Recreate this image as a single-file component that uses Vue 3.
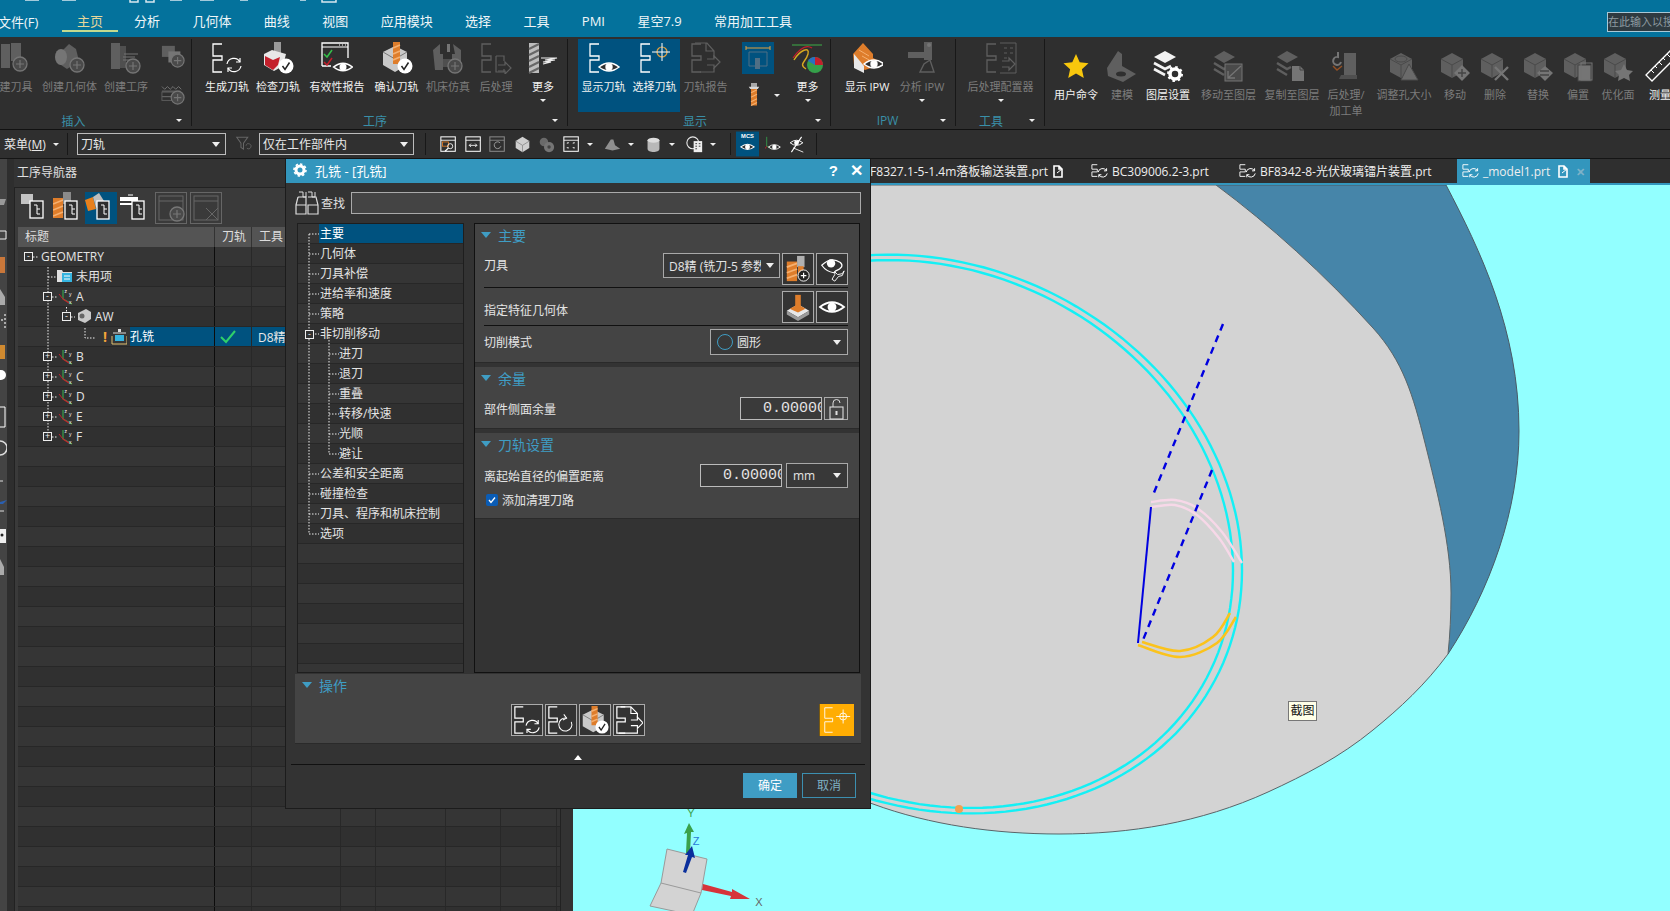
<script setup>
// tiny svg pieces shared between icons
const D = '#5f5f5f'
const D2 = '#757575'
const S5 = (c = '#fff', w = 1.3) => `<path d="M11 2H2V14H11V18H2V30H11" fill="none" stroke="${c}" stroke-width="${w}"/>`
const eye = (x, y, s = 1) => `<g transform="translate(${x} ${y}) scale(${s})"><path d="M-10 0Q0-8 10 0Q0 8-10 0Z" fill="#2f2f2f" stroke="#fff" stroke-width="1.5"/><circle r="3.7" fill="#fff"/></g>`
const badge = (x, y) => `<circle cx="${x}" cy="${y}" r="7.5" fill="#fff"/><path d="M${x - 3.5} ${y}l2.5 3.5 4.5-7" fill="none" stroke="#222" stroke-width="1.5"/>`
const plus = (x, y, c = D2) => `<circle cx="${x}" cy="${y}" r="7" fill="#4a4a4a" stroke="${c}" stroke-width="1.3"/><path d="M${x - 4} ${y}h8M${x} ${y - 4}v8" stroke="${c}" stroke-width="1.2"/>`
const refresh = (x, y, c = '#fff') => `<g transform="translate(${x} ${y})" fill="none" stroke="${c}" stroke-width="1.2"><path d="M-7 -1A7 7 0 0 1 6 -3"/><path d="M7 1A7 7 0 0 1 -6 3"/><path d="M6-7v4h-4M-6 7v-4h4"/></g>`
const drillBody = `<g><rect x="12" y="0" width="8" height="6" fill="#a8a8a8"/><path d="M9 5h14l-2 3H11z" fill="#d8d8d8"/><rect x="12" y="8" width="8" height="22" fill="#de7d2b"/><path d="M12 13l8-4M12 19l8-4M12 25l8-4M12 30l8-4" stroke="#f5b070" stroke-width="1.6"/></g>`
const cubeDim = `<path d="M2 9L13 3l11 6v13l-11 6-11-6z" fill="${D}"/><path d="M2 9l11 6 11-6M13 15v13" fill="none" stroke="#4a4a4a"/>`
const arrowOut = (x, y, c) => `<path d="M${x} ${y}h7v-3l6 6-6 6v-3h-7" fill="none" stroke="${c}" stroke-width="1.2"/>`

const icons = {
  toolAdd: `<rect x="1" y="2" width="9" height="24" fill="${D}"/><rect x="11" y="1" width="10" height="18" fill="${D}"/>${plus(20, 22)}`,
  geomAdd: `<path d="M4 13L15 2l7 5 3 12-12 8-9-6z" fill="${D}"/><ellipse cx="7" cy="15" rx="6" ry="8" fill="${D2}"/>${plus(23, 23)}`,
  opAdd: `<rect x="1" y="1" width="9" height="26" fill="${D}"/><rect x="10" y="4" width="6" height="22" fill="#4f4f4f"/><path d="M14 12h14M13 15h12M13 18h10" stroke="${D2}"/>${plus(23, 24)}`,
  small1: `<rect x="1" y="1" width="14" height="12" fill="${D}"/><rect x="8" y="7" width="13" height="12" fill="${D2}"/>${plus(18, 17)}`,
  small2: `<path d="M1 5l3 3 3-3 3 3 3-3 3 3 3-3 3 3" fill="none" stroke="${D2}"/><path d="M1 10h20M1 16h12" stroke="${D2}"/><rect x="1" y="11" width="16" height="9" fill="none" stroke="${D}"/>${plus(18, 17)}`,
  gen: `${S5()}${refresh(23, 23)}`,
  verify: `<rect x="12" y="0" width="7" height="16" fill="#9a9a9a"/><path d="M2 12l8-4 14 4-3 12-9 5-10-6z" fill="#e8e8e8"/><path d="M3 14l8 4 7-3-2 8-5 5-8-5z" fill="#c4202c"/>${badge(24, 24)}`,
  report: `<path d="M1 24V1h26v15M1 24h9" fill="none" stroke="#fff" stroke-width="1.3"/><path d="M1 5h26M18 3h1M21 3h1M24 3h1" stroke="#fff"/><path d="M3 12l3 3 5-7" fill="none" stroke="#35c04a" stroke-width="1.5"/><path d="M3 20l3 3 5-7" fill="none" stroke="#c4202c" stroke-width="1.5"/>${eye(22, 25, .95)}`,
  confirm: `<path d="M2 10l12-6 12 6v13l-12 7-12-7z" fill="#c9c9c9"/><path d="M2 10l12 7 12-7" fill="none" stroke="#777"/><rect x="12" y="0" width="7" height="22" fill="#de7d2b"/><path d="M12 6l7-3M12 12l7-3M12 18l7-3" stroke="#f5b070" stroke-width="1.6"/>${badge(24, 24)}`,
  sim: `<path d="M1 8l7-6v10h3V28H3z" fill="${D}"/><path d="M21 2l8 6v20h-9V12h3z" fill="${D}"/><rect x="11" y="17" width="11" height="8" fill="#4f4f4f"/><rect x="15" y="2" width="3" height="8" fill="${D2}"/>${plus(23, 24)}`,
  post: `${S5(D)}<path d="M16 14h8v5M24 27v3h-8V14" fill="none" stroke="${D}" stroke-width="1.2"/>${arrowOut(18, 23, D)}`,
  more: `<rect x="2" y="1" width="10" height="30" fill="#bcbcbc"/><path d="M2 7l10-5M2 13l10-5M2 19l10-5M2 25l10-5M2 31l10-5" stroke="#666" stroke-width="2"/><path d="M14 16h16l-12 2h10l-12 2h8l-8 2" fill="none" stroke="#eee" stroke-width="1.2"/>`,
  show: `${S5()}${eye(21, 25)}`,
  select: `${S5()}<circle cx="23" cy="10" r="5" fill="none" stroke="#e0a040" stroke-width="1.2"/><path d="M13 10h18M23 1v18" stroke="#fff"/>`,
  pathReport: `${S5(D)}<path d="M5 1h12l7 8v7M16 1v8h8M10 30h14v-4" fill="none" stroke="${D}" stroke-width="1.2"/>${arrowOut(17, 17, D)}`,
  cross: `<rect width="32" height="32" fill="#00527f"/><path d="M4 6h24M4 4v4M28 4v4" stroke="#e0a040"/><path d="M7 10h18v14H7z" fill="none" stroke="#4f6f85"/><rect x="13" y="16" width="5" height="11" fill="#4f6f85"/>`,
  drill: drillBody,
  colors: `<path d="M0 3h30" stroke="#3fae49"/><path d="M2 18C8 8 18 4 16 12S6 22 14 27" fill="none" stroke="#d8a820" stroke-width="1.4"/><path d="M1 16C8 6 14 2 20 6" fill="none" stroke="#c4202c" stroke-width="1.3"/><circle cx="23" cy="23" r="8" fill="#35a04a"/><path d="M23 23V15A8 8 0 0 1 31 23z" fill="#c4202c"/><path d="M23 23L16 19A8 8 0 0 1 23 15z" fill="#2a6fc0"/>`,
  ipw: `<path d="M2 12L12 1l10 11v4l4 2v6L14 28 3 23z" fill="#de7d2b"/><path d="M3 12v14l10 5V24z" fill="#e8e8e8"/><path d="M8 8l10 6M11 14l9 5" stroke="#f5b070"/>${eye(23, 22, 1)}`,
  analyze: `<path d="M2 10h22v6H2z" fill="${D}"/><rect x="18" y="0" width="8" height="18" fill="${D}"/><path d="M14 30l4-8 6-4 4 12z" fill="none" stroke="${D}" stroke-width="1.4"/><circle cx="23" cy="3" r="2" fill="${D2}"/>`,
  postCfg: `${S5(D)}<path d="M15 1h16v30H15M19 6h3M25 6h3M19 11h3M25 11h3M19 16h3" fill="none" stroke="${D}"/>${arrowOut(17, 19, D)}`,
  star: `<path d="M16 4l3.7 8.2 8.8 1-6.6 6 1.9 8.8L16 23.4 8.2 28l1.9-8.8-6.6-6 8.8-1z" fill="#f8c70d"/>`,
  model: `<path d="M1 18L12 1l4 3v12l14 8-13 8L2 26z" fill="${D}"/><ellipse cx="15" cy="24" rx="5" ry="2.5" fill="#2f2f2f"/>`,
  layer: `<path d="M2 7l11-6 11 6-11 6z" fill="#f2f2f2"/><path d="M2 13l11 6 6-3M2 19l11 6" fill="none" stroke="#f2f2f2" stroke-width="2.6"/><circle cx="23" cy="24" r="5" fill="none" stroke="#fff" stroke-width="3.5"/><circle cx="23" cy="24" r="7" fill="none" stroke="#fff" stroke-width="2" stroke-dasharray="2.5 3"/>`,
  moveLayer: `<path d="M1 7l10-6 11 6-11 6z" fill="${D}"/><path d="M1 13l10 6 4-2M1 19l10 6" fill="none" stroke="${D}" stroke-width="2.5"/><rect x="12" y="14" width="17" height="17" fill="#4a4a4a" stroke="${D2}"/><path d="M15 28L28 16M15 21v7h7" fill="none" stroke="${D2}" stroke-width="1.3"/>`,
  copyLayer: `<path d="M1 7l10-6 11 6-11 6z" fill="${D}"/><path d="M1 13l10 6 4-2M1 19l10 6" fill="none" stroke="${D}" stroke-width="2.5"/><path d="M16 16h8l4 4v11H16z" fill="${D2}"/><path d="M24 16v4h4" fill="none" stroke="#444"/>`,
  postShop: `<path d="M14 3h12v22H14z" fill="${D}"/><path d="M11 25h16v4H9z" fill="#4f4f4f"/><path d="M8 2v5a4 4 0 1 0 3 5" fill="none" stroke="${D2}" stroke-width="2"/><path d="M3 16l4 4 5-4" fill="none" stroke="#c06020" stroke-width="1.4" opacity=".7"/>`,
  holeSize: `${cubeDim}<ellipse cx="13" cy="9" rx="6" ry="3" fill="none" stroke="#4a4a4a"/><path d="M21 14l9 16H13z" fill="#6a6a6a" stroke="#4a4a4a"/>`,
  move: `${cubeDim}<path d="M23 15l8 8-8 8-8-8z" fill="${D2}"/><path d="M19 23h8M23 19v8" stroke="#444" stroke-width="1.4"/>`,
  del: `${cubeDim}<path d="M16 17l13 13M29 17L16 30" stroke="${D2}" stroke-width="2.4"/>`,
  replace: `${cubeDim}<path d="M15 23l8-7 8 7-8 8z" fill="${D2}"/><path d="M18 21h9M27 25h-9" stroke="#444" stroke-width="1.4"/>`,
  offset: `${cubeDim}<rect x="16" y="15" width="13" height="16" fill="${D2}" stroke="#444"/><rect x="19" y="13" width="11" height="17" fill="none" stroke="${D2}"/>`,
  optimize: `${cubeDim}<path d="M22 14l3 6 6 1-4 4 1 6-6-3-6 3 1-6-4-4 6-1z" fill="${D2}"/>`,
  ruler: `<path d="M2 25L26 1l6 6L8 31z" fill="#2f2f2f" stroke="#fff" stroke-width="1.3"/><path d="M7 20l3 3M11 16l2 2M15 12l3 3M19 8l2 2M23 4l3 3" stroke="#fff"/>`,
  // small ones, 20 box
  tbMag: `<rect x="1" y="1" width="17" height="17" fill="#2f2f2f" stroke="#fff" stroke-width="1.2"/><path d="M1 5h17" stroke="#fff"/><rect x="3" y="7" width="7" height="5" fill="none" stroke="#e07b25"/><circle cx="12" cy="12" r="3" fill="none" stroke="#fff"/><path d="M10 14l-4 4" stroke="#fff" stroke-width="1.5"/>`,
  tbFit: `<rect x="1" y="1" width="17" height="17" fill="none" stroke="#fff" stroke-width="1.2"/><path d="M1 5h17M5 11h9M5 11l2-2M5 11l2 2M14 11l-2-2M14 11l-2 2" stroke="#fff"/>`,
  tbRot: `<rect x="1" y="1" width="17" height="17" fill="none" stroke="#8a8a8a" stroke-width="1.2"/><path d="M1 5h17" stroke="#8a8a8a"/><path d="M13 8a4 4 0 1 0 1 4" fill="none" stroke="#aaa"/>`,
  tbCube: `<path d="M2 6l8-5 8 5v8l-8 5-8-5z" fill="#cfcfcf"/><path d="M2 6l8 5 8-5M10 11v8" fill="none" stroke="#8a8a8a"/>`,
  tbGear: `<circle cx="7" cy="7" r="5" fill="#6a6a6a"/><circle cx="13" cy="13" r="6" fill="#757575"/><circle cx="13" cy="13" r="2" fill="#444"/>`,
  tbFrame: `<rect x="1" y="1" width="17" height="17" fill="none" stroke="#fff" stroke-width="1.2"/><path d="M1 5h17M5 9v-1h2M14 8h-2v1M5 13v1h2M14 14h-2v-1" stroke="#fff" fill="none"/>`,
  tbCone: `<path d="M1 15l7-11h3l2 7 6 4-9 2z" fill="#8f8f8f"/>`,
  tbCyl: `<path d="M3 5v10c0 5 14 5 14 0V5z" fill="#b8b8b8"/><ellipse cx="10" cy="5" rx="7" ry="3" fill="#dcdcdc"/>`,
  tbPage: `<circle cx="8" cy="8" r="7" fill="#2f2f2f" stroke="#e8e8e8" stroke-width="1.3"/><rect x="9" y="6" width="10" height="13" fill="#eee"/><path d="M11 9h2M15 9h2M11 12h2M15 12h2M11 15h2" stroke="#222"/>`,
  tbMcs: `<rect x="-2" y="-3" width="24" height="26" fill="#00527f"/><text x="10" y="4" font-size="6" font-weight="700" fill="#fff" text-anchor="middle" font-family="Liberation Sans">MCS</text>${eye(10, 13, .7)}`,
  tbEye: `<path d="M2 1v11l6 3" fill="none" stroke="#35a04a"/><path d="M2 12l-2 3" stroke="#c4202c"/>${eye(11, 13, .7)}`,
  tbSlash: `${eye(10, 8, .75)}<path d="M16 1L4 19" stroke="#fff" stroke-width="1.3"/><path d="M6 14l12 5" stroke="#fff"/>`,
  filter: `<path d="M2 2h13l-5 7v7l-3-2V9z" fill="none" stroke="#666" stroke-width="1.2"/><path d="M13 12a3 3 0 1 1 1 3" fill="none" stroke="#666"/>`,
  // navigator
  navA: `<rect x="0" y="2" width="12" height="10" fill="#c4c4c4"/><rect x="9" y="9" width="13" height="17" fill="#2f2f2f" stroke="#fff" stroke-width="1.3"/><path d="M13 13h3v9h3M16 17h3" fill="none" stroke="#fff"/>`,
  navB: `<rect x="0" y="6" width="10" height="20" fill="#de7d2b"/><path d="M0 12l10-4M0 18l10-4M0 24l10-4" stroke="#f5b070" stroke-width="1.6"/><rect x="10" y="0" width="8" height="12" fill="#8a8a8a"/><rect x="12" y="9" width="12" height="18" fill="#2f2f2f" stroke="#fff" stroke-width="1.3"/><path d="M16 13h3v9h3M19 17h3" fill="none" stroke="#fff"/>`,
  navC: `<path d="M0 8l8-3 3 12-8 2z" fill="#e8801c"/><path d="M8 5l6-4 5 8-8 7z" fill="#bdbdbd"/><rect x="12" y="9" width="12" height="18" fill="#2f2f2f" stroke="#fff" stroke-width="1.3"/><path d="M16 13h3v9h3M19 17h3" fill="none" stroke="#fff"/>`,
  navD: `<path d="M0 6h18M0 12h14M0 8h18" stroke="#fff" stroke-width="2" fill="none"/><path d="M8 3h5" stroke="#fff"/><rect x="12" y="9" width="12" height="18" fill="#2f2f2f" stroke="#fff" stroke-width="1.3"/><path d="M16 13h3v9h3M19 17h3" fill="none" stroke="#fff"/>`,
  navE: `<rect x="4" y="4" width="24" height="24" fill="none" stroke="#666"/><path d="M4 9h24" stroke="#666"/>${plus(22, 22, '#777')}`,
  navF: `<rect x="4" y="4" width="24" height="24" fill="none" stroke="#666"/><path d="M4 9h24M16 16l12 12M28 16L16 28" stroke="#666"/>`,
  folder: `<path d="M0 2h5l1 2h9v10H0z" fill="#e0e0e0"/><rect x="5" y="5" width="10" height="9" fill="#35b4e0"/><path d="M7 8h6M7 11h6" stroke="#fff"/>`,
  mcs: `<path d="M5 2v9l9 5" fill="none" stroke="#35a04a" stroke-width="1.2"/><path d="M5 11L1 6" stroke="#c4202c"/><path d="M5 11l6 4" stroke="#c4202c" stroke-width="1.2"/><text x="6.5" y="5" font-size="5" fill="#fff" font-family="Liberation Sans">z</text><text x="11" y="8" font-size="5" fill="#fff" font-family="Liberation Sans">y</text><text x="11" y="16" font-size="5" fill="#fff" font-family="Liberation Sans">x</text>`,
  part: `<path d="M1 5l8-4 5 3v7l-6 4-7-3z" fill="#c9c9c9"/><circle cx="5" cy="8" r="2.5" fill="#666"/>`,
  hole: `<path d="M1 8v8h15V8" fill="none" stroke="#e0c070"/><rect x="4" y="7" width="9" height="6" fill="#35b4e0"/><rect x="7" y="1" width="3" height="3" fill="#ddd"/><path d="M2 5h13" stroke="#ddd"/>`,
  // dialog
  binoc: `<path d="M4 1h4v5h3V1h0M13 1h4v5h3V1" fill="none" stroke="#ddd"/><path d="M3 6h8v8H1v9h10v-9M13 6h8l2 8v9H13v-9h10M1 14l2-8" fill="none" stroke="#ddd" stroke-width="1.2"/>`,
  toolNew: `<rect x="13" y="1" width="8" height="12" fill="#b0b0b0"/><rect x="2" y="7" width="11" height="21" fill="#de7d2b"/><path d="M2 13l11-4M2 19l11-4M2 25l11-4" stroke="#f5b070" stroke-width="1.8"/><rect x="14" y="12" width="6" height="12" fill="#de7d2b"/><circle cx="20" cy="22" r="6" fill="#222" stroke="#fff"/><path d="M17 22h6M20 19v6" stroke="#fff" stroke-width="1.3"/>`,
  toolView: `<path d="M3 11Q13 1 23 8Q28 13 18 17l-2 2Q8 18 3 11z" fill="none" stroke="#fff" stroke-width="1.3"/><circle cx="13" cy="9" r="4.5" fill="#fff"/><path d="M17 18l3 3 5-1 2-3-2 5-4 1-4 5-3-2 3-5z" fill="none" stroke="#fff"/>`,
  geomSpec: `<path d="M2 19l12-7 12 7-12 7z" fill="#e8e8e8"/><path d="M2 19v4l12 7v-4zM26 19v4l-12 7v-4z" fill="#9a9a9a"/><path d="M5 17l9-5 8 5-8 4z" fill="#de7d2b"/><rect x="11" y="2" width="6" height="14" fill="#de7d2b"/>`,
  eyeBig: eye(14, 12, 1.2),
  lock: `<rect x="3" y="9" width="13" height="12" fill="none" stroke="#ddd" stroke-width="1.1"/><path d="M6 9V5a3.5 3.5 0 0 1 7 0" fill="none" stroke="#ddd"/><rect x="8.5" y="13" width="2" height="4" fill="#ddd"/>`,
  opGen: `${S5()}${refresh(21, 23)}`,
  opReplay: `${S5()}<path d="M26 18a7 7 0 1 1-5-4" fill="none" stroke="#fff" stroke-width="1.1"/><path d="M18 10l3 4-4 2" fill="none" stroke="#fff" stroke-width="1.1"/>`,
  opPost: `<path d="M5 2h11l7 7v5M16 2v7h7M3 30h20v-4" fill="none" stroke="#fff" stroke-width="1.2" transform="translate(1 0)"/>${S5()}${arrowOut(17, 16, '#fff')}`,
  orange: `${S5('#fff', 1)}<circle cx="23" cy="12" r="4" fill="none" stroke="#fff"/><path d="M15 12h16M23 4v16" stroke="#fff"/>`,
  page: `<path d="M1 1h5l3 3v8H1zM6 1v3h3" fill="none" stroke="#fff" stroke-width="1.6"/><path d="M4 8l5-4" stroke="#fff"/>`,
  tabIco: `<path d="M7 1H1V6H7V9H1V14H7" fill="none" stroke="#fff"/><g transform="translate(13 10) scale(.72)" fill="none" stroke="#fff" stroke-width="1.5"><path d="M-7 -1A7 7 0 0 1 6 -3"/><path d="M7 1A7 7 0 0 1 -6 3"/><path d="M6-7v4h-4M-6 7v-4h4"/></g>`,
}

const menu = ['主页', '分析', '几何体', '曲线', '视图', '应用模块', '选择', '工具', 'PMI', '星空7.9', '常用加工工具']

const groups = [
  { label: '插入', w: 202, foot: 34, items: [
    { t: '建刀具', i: 'toolAdd', w: 52, dim: 1 }, { t: '创建几何体', i: 'geomAdd', w: 55, dim: 1 }, { t: '创建工序', i: 'opAdd', w: 58, dim: 1 }, { col: ['small1', 'small2'], w: 35 },
  ] },
  { label: '工序', w: 376, pad: 9, foot: 18, items: [
    { t: '生成刀轨', i: 'gen', w: 52 }, { t: '检查刀轨', i: 'verify', w: 50 }, { t: '有效性报告', i: 'report', w: 68 }, { t: '确认刀轨', i: 'confirm', w: 51 },
    { t: '机床仿真', i: 'sim', w: 52, dim: 1 }, { t: '后处理', i: 'post', w: 44, dim: 1 }, { t: '更多', i: 'more', w: 50, drop: 1 },
  ] },
  { label: '显示', w: 263, pad: 10, foot: 18, items: [
    { t: '显示刀轨', i: 'show', w: 51, on: 1 }, { t: '选择刀轨', i: 'select', w: 51, on: 1 }, { t: '刀轨报告', i: 'pathReport', w: 51, dim: 1 },
    { mix: 1, w: 53 }, { t: '更多', i: 'colors', w: 47, drop: 1 },
  ] },
  { label: 'IPW', w: 125, pad: 5, foot: 16, items: [
    { t: '显示 IPW', i: 'ipw', w: 62 }, { t: '分析 IPW', i: 'analyze', w: 48, dim: 1, drop: 1 },
  ] },
  { label: '工具', w: 89, foot: 18, items: [{ t: '后处理配置器', i: 'postCfg', w: 89, dim: 1, drop: 1 }] },
]

const tail = [
  { t: '用户命令', i: 'star', w: 58 }, { t: '建模', i: 'model', w: 34, dim: 1 }, { t: '图层设置', i: 'layer', w: 58 }, { t: '移动至图层', i: 'moveLayer', w: 63, dim: 1 },
  { t: '复制至图层', i: 'copyLayer', w: 64, dim: 1 }, { t: '后处理/', t2: '加工单', i: 'postShop', w: 44, dim: 1 }, { t: '调整孔大小', i: 'holeSize', w: 72, dim: 1 },
  { t: '移动', i: 'move', w: 30, dim: 1 }, { t: '删除', i: 'del', w: 50, dim: 1 }, { t: '替换', i: 'replace', w: 36, dim: 1 }, { t: '偏置', i: 'offset', w: 44, dim: 1 },
  { t: '优化面', i: 'optimize', w: 36, dim: 1 }, { t: '测量', i: 'ruler', w: 48 },
]

const tbIcons = [
  { i: 'tbMag' }, { i: 'tbFit' }, { i: 'tbRot' }, { i: 'tbCube' }, { i: 'tbGear' }, { i: 'tbFrame', drop: 1 }, { i: 'tbCone', drop: 1 }, { i: 'tbCyl', drop: 1 }, { i: 'tbPage', drop: 1 },
]

const navTools = ['navA', 'navB', 'navC', 'navD', 'navE', 'navF']

const navCols = [197, 37, 89, 35, 70, 55, 56]
const navRows = [
  { t: 'GEOMETRY', x: 6, exp: '-', gap: 2 },
  { t: '未用项', x: 39, icon: 'folder', iw: 15, gap: 4 },
  { t: 'A', x: 25, exp: '-', icon: 'mcs', iw: 15, gap: 3 },
  { t: 'AW', x: 44, exp: '-', icon: 'part', iw: 14, gap: 4 },
  { t: '孔铣', x: 85, warn: 1, icon: 'hole', iw: 16, gap: 3, picked: 1 },
  { t: 'B', x: 25, exp: '+', icon: 'mcs', iw: 15, gap: 3 },
  { t: 'C', x: 25, exp: '+', icon: 'mcs', iw: 15, gap: 3 },
  { t: 'D', x: 25, exp: '+', icon: 'mcs', iw: 15, gap: 3 },
  { t: 'E', x: 25, exp: '+', icon: 'mcs', iw: 15, gap: 3 },
  { t: 'F', x: 25, exp: '+', icon: 'mcs', iw: 15, gap: 3 },
  ...Array.from({ length: 24 }, () => ({})),
]

const steps = [
  { t: '主要', on: 1 }, { t: '几何体' }, { t: '刀具补偿' }, { t: '进给率和速度' }, { t: '策略' }, { t: '非切削移动', exp: 1 },
  { t: '进刀', sub: 1 }, { t: '退刀', sub: 1 }, { t: '重叠', sub: 1 }, { t: '转移/快速', sub: 1 }, { t: '光顺', sub: 1 }, { t: '避让', sub: 1 },
  { t: '公差和安全距离' }, { t: '碰撞检查' }, { t: '刀具、程序和机床控制' }, { t: '选项' },
  ...Array.from({ length: 7 }, () => ({ t: '' })),
]
const stepLines = steps.filter(s => s.t).map((s, n) => {
  const y = 10 + n * 20
  return s.sub ? `M31 ${y}H41` : `M11 ${y}H21`
}).join('') + 'M11 10V310M31 110V230'

// smooth line through picked points of the model curves
const spline = pts => {
  let d = `M${pts[0][0]} ${pts[0][1]}`
  for (let n = 0; n < pts.length - 1; n++) {
    const a = pts[Math.max(n - 1, 0)], b = pts[n], c = pts[n + 1], e = pts[Math.min(n + 2, pts.length - 1)]
    d += `C${(b[0] + (c[0] - a[0]) / 6).toFixed(1)} ${(b[1] + (c[1] - a[1]) / 6).toFixed(1)} ${(c[0] - (e[0] - b[0]) / 6).toFixed(1)} ${(c[1] - (e[1] - b[1]) / 6).toFixed(1)} ${c[0]} ${c[1]}`
  }
  return d
}
// the hole edge is a sheared ellipse seen in perspective, the left side sits behind the dialog
const ring = (a, b) => {
  const pts = []
  for (let deg = -112; deg <= 112; deg += 2) {
    const t = deg * Math.PI / 180
    pts.push(`${(930 + a * Math.cos(t)).toFixed(1)} ${(534 + 36.5 * Math.cos(t) + b * Math.sin(t)).toFixed(1)}`)
  }
  return 'M' + pts.join('L')
}
const ringOuter = ring(312, 277)
const ringInner = ring(303, 271.5)
const pinkOuter = spline([[1151, 502], [1175, 500], [1197, 508], [1222, 532], [1242, 563]])
const pinkInner = spline([[1152, 507], [1175, 505], [1197, 515], [1219, 538], [1234, 562]])
const goldOuter = spline([[1138, 645], [1180, 657], [1217, 643], [1236, 617]])
const goldInner = spline([[1142, 642], [1180, 651], [1213, 637], [1230, 613]])
</script>

<template>
  <div class="app">
    <header class="menubar">
      <svg class="quick" width="400" height="3"><path d="M25 0h14M62 0h14M130 0v2h8v-2M146 0v2h8v-2M170 0h12M200 0h14M240 0h8M300 0h6M322 0v2h14v-2" stroke="#d8e8ef" stroke-width="1.5" fill="none" /></svg>
      <span class="menu-file">文件(F)</span>
      <nav class="menu-list">
        <span v-for="(m, n) in menu" :key="m" class="menu-item" :class="{ active: n === 0 }">{{ m }}</span>
      </nav>
      <div class="search-box">在此输入以搜索</div>
    </header>

    <section class="ribbon">
      <div v-for="g in groups" :key="g.label" class="rgroup" :style="{ width: g.w + 'px', paddingLeft: (g.pad || 0) + 'px' }">
        <div class="ritems">
          <template v-for="it in g.items" :key="it.t || it.w">
            <div v-if="it.col" class="rcol" :style="{ width: it.w + 'px' }">
              <svg v-for="c in it.col" :key="c" width="24" height="24" viewBox="0 0 26 24" v-html="icons[c]"></svg>
            </div>
            <div v-else-if="it.mix" class="rmix" :style="{ width: it.w + 'px' }">
              <svg width="32" height="32" viewBox="0 0 32 32" v-html="icons.cross"></svg>
              <div class="rmix-low">
                <svg width="20" height="24" viewBox="4 0 24 32" v-html="icons.drill"></svg>
                <i class="tri small"></i>
              </div>
            </div>
            <div v-else class="ritem" :class="{ dim: it.dim, on: it.on }" :style="{ width: it.w + 'px' }">
              <svg width="32" height="32" viewBox="0 0 32 32" v-html="icons[it.i]"></svg>
              <span class="rlabel">{{ it.t }}</span>
              <i v-if="it.drop" class="tri small"></i>
            </div>
          </template>
        </div>
        <div class="rfoot" :style="{ paddingRight: g.foot + 'px' }">
          <span>{{ g.label }}</span>
          <i class="tri small"></i>
        </div>
      </div>
      <div class="rtail">
        <div v-for="it in tail" :key="it.t" class="ritem" :class="{ dim: it.dim }" :style="{ width: it.w + 'px' }">
          <svg width="32" height="32" viewBox="0 0 32 32" v-html="icons[it.i]"></svg>
          <span class="rlabel">{{ it.t }}</span>
          <span v-if="it.t2" class="rlabel second">{{ it.t2 }}</span>
        </div>
      </div>
    </section>

    <section class="toolbar">
      <span class="tb-menu">菜单(<u>M</u>)</span>
      <i class="tri small"></i>
      <b class="tb-sep first"></b>
      <div class="tb-select wide">刀轨<i class="tri"></i></div>
      <svg class="tb-filter" width="17" height="18" viewBox="0 0 20 20" v-html="icons.filter"></svg>
      <div class="tb-select">仅在工作部件内<i class="tri"></i></div>
      <b class="tb-sep before-icons"></b>
      <div class="tb-icons">
        <template v-for="t in tbIcons" :key="t.i">
          <svg width="17" height="17" viewBox="0 0 20 20" v-html="icons[t.i]"></svg>
          <i v-if="t.drop" class="tri small"></i>
        </template>
      </div>
      <b class="tb-sep"></b>
      <div class="tb-views">
        <svg class="mcs-ico" width="23" height="26" viewBox="-2 -3 24 26" v-html="icons.tbMcs"></svg>
        <svg width="17" height="17" viewBox="0 0 20 20" v-html="icons.tbEye"></svg>
        <svg width="17" height="17" viewBox="0 0 20 20" v-html="icons.tbSlash"></svg>
      </div>
      <b class="tb-sep"></b>
    </section>

    <main class="work">
      <aside class="strip">
        <svg width="7" height="752" viewBox="0 0 7 752">
          <path d="M0 40h6l-2 6H0z" fill="#999" />
          <path d="M0 72h6v8H0" fill="none" stroke="#eee" />
          <rect y="98" width="5" height="16" fill="#c9773a" />
          <path d="M0 130l5 8v8H0z" fill="#aaa" />
          <path d="M5 155v14M2 160v3" stroke="#ccc" stroke-dasharray="2 2" stroke-width="1.5" />
          <path d="M0 186h5v14H0z" fill="#d08a30" />
          <circle cx="1" cy="216" r="5" fill="#fff" />
          <path d="M0 248h5v20H0" fill="none" stroke="#fff" />
          <path d="M0 282a6 6 0 0 1 0 14" fill="none" stroke="#ddd" stroke-width="1.5" />
          <path d="M0 322h3" stroke="#ddd" /><path d="M0 343l7-2-4 4H0z" fill="#2a5fb0" />
          <path d="M0 352h4" stroke="#ddd" />
          <rect y="370" width="6" height="14" fill="#eee" /><circle cx="2" cy="376" r="1.5" fill="#222" />
          <path d="M0 400l4 8v8H0z" fill="#aaa" />
        </svg>
      </aside>

      <div class="nav">
        <div class="nav-title">工序导航器</div>
        <div class="nav-frame">
          <div class="nav-tools">
            <span v-for="(t, n) in navTools" :key="t" class="nav-tool" :class="{ on: n === 2, off: n > 3 }">
              <svg width="32" height="32" viewBox="0 0 32 32" v-html="icons[t]"></svg>
            </span>
          </div>
          <div class="nav-head">
            <span v-for="(c, n) in navCols" :key="n" :style="{ width: c + 'px' }">{{ ['标题', '刀轨', '工具'][n] }}</span>
          </div>
          <div class="nav-body">
            <svg class="tree-lines" width="120" height="210"><path d="M30 20V190M30 30H39M15 10H21M34 50H39M34 110H39M34 130H39M34 150H39M34 170H39M34 190H39M53 70H57M48.5 60V66M67 81V91H77" stroke="#eee" stroke-dasharray="1.5 1.5" fill="none" /></svg>
            <div v-for="(r, n) in navRows" :key="n" class="nav-row" :class="{ picked: r.picked }">
              <span class="nav-cell first" :style="{ paddingLeft: (r.x || 0) + 'px' }">
                <i v-if="r.exp" class="exp">{{ r.exp }}</i>
                <i v-if="r.warn" class="warn">!</i>
                <svg v-if="r.icon" class="row-ico" :width="r.iw" height="17" :viewBox="`0 0 ${r.iw} 17`" v-html="icons[r.icon]"></svg>
                <span v-if="r.t" class="nav-text" :style="{ marginLeft: r.gap + 'px' }">{{ r.t }}</span>
              </span>
              <span class="nav-cell second">
                <svg v-if="r.picked" width="16" height="14" viewBox="0 0 16 14"><path d="M1 7l5 5L15 1" fill="none" stroke="#2fd06a" stroke-width="2" /></svg>
              </span>
              <span class="nav-cell third">{{ r.picked ? 'D8精' : '' }}</span>
              <span class="nav-cell"></span><span class="nav-cell"></span><span class="nav-cell"></span><span class="nav-cell"></span>
            </div>
          </div>
        </div>
      </div>

      <div class="view">
        <div class="tabs">
          <div class="tab one">BF8327.1-5-1.4m落板输送装置.prt<svg class="tab-doc" width="11" height="13" viewBox="0 0 11 13" v-html="icons.page"></svg></div>
          <div class="tab two"><svg width="18" height="16" viewBox="0 0 20 16" v-html="icons.tabIco"></svg>BC309006.2-3.prt</div>
          <div class="tab three"><svg width="18" height="16" viewBox="0 0 20 16" v-html="icons.tabIco"></svg>BF8342-8-光伏玻璃镭片装置.prt</div>
          <div class="tab active"><svg width="18" height="16" viewBox="0 0 20 16" v-html="icons.tabIco"></svg>_model1.prt<svg class="tab-doc" width="11" height="13" viewBox="0 0 11 13" v-html="icons.page"></svg><span class="tab-x">✕</span></div>
        </div>
        <div class="canvas">
          <svg width="1097" height="726" viewBox="573 185 1097 726">
            <path d="M1216 185H1446C1480 250 1519 330 1519 431C1519 510 1490 590 1448 654L1300 500Z" fill="#4685a9" stroke="#4a5a66" />
            <path d="M1216 185C1270 225 1325 275 1373 328C1403 361 1413 395 1425 443C1437 491 1451 545 1451 593C1451 615 1450 635 1448 654C1425 685 1400 708 1373 730C1340 757 1305 775 1268 792C1200 823 1130 834 1059 834C995 834 930 825 873 804L800 780V185Z" fill="#d3d3d3" stroke="#5a6468" />
            <g fill="none">
              <path :d="ringOuter" stroke="#14f0f5" stroke-width="2.4" />
              <path :d="ringInner" stroke="#14f0f5" stroke-width="2.4" />
              <path :d="pinkOuter" stroke="#f7d8e8" stroke-width="2.4" />
              <path :d="pinkInner" stroke="#f7d8e8" stroke-width="2.4" />
              <path :d="goldOuter" stroke="#fbc31c" stroke-width="2.6" />
              <path :d="goldInner" stroke="#fbc31c" stroke-width="2.6" />
              <path d="M1151 507L1138 643" stroke="#0000e0" stroke-width="2" />
              <path d="M1223 324L1153 495M1212 470L1143 640" stroke="#0000e0" stroke-width="2.4" stroke-dasharray="7 5.5" />
            </g>
            <circle cx="959" cy="809" r="4" fill="#f4a150" />
            <path d="M667 849L707 859L701 893L692 915L650 906L661 883Z" fill="#d3d3d3" stroke="#9a9a9a" />
            <path d="M661 883L701 893" stroke="#9a9a9a" />
            <path d="M686 853L687 833L684 834L689 823L694 832L691 832L690 853Z" fill="#3aa14b" />
            <path d="M683 872L688 855L685 855L692 846L695 858L692 857L686 873Z" fill="#0a2f9c" />
            <path d="M703 884L732 892L732 889L750 899L730 899L731 896L702 890Z" fill="#d6343a" />
            <text x="691" y="817" class="gz" fill="#3aa14b" text-anchor="middle">Y</text>
            <text x="696" y="845" class="gz" fill="#2a7ad8" text-anchor="middle">Z</text>
            <text x="759" y="906" class="gz" fill="#666" text-anchor="middle">X</text>
          </svg>
          <div class="snap-tip">截图</div>
        </div>
      </div>
    </main>

    <div class="dlg">
      <div class="dlg-title">
        <svg width="14" height="14" viewBox="0 0 14 14"><circle cx="7" cy="7" r="4" fill="none" stroke="#fff" stroke-width="3" /><circle cx="7" cy="7" r="6" fill="none" stroke="#fff" stroke-width="1.6" stroke-dasharray="2.4 2.2" /></svg>
        <span class="dlg-name">孔铣 - [孔铣]</span>
        <span class="dlg-help">?</span>
        <span class="dlg-close">✕</span>
      </div>
      <div class="dlg-find">
        <svg width="24" height="24" viewBox="0 0 24 24" v-html="icons.binoc"></svg>
        <span>查找</span>
        <div class="find-input"></div>
      </div>
      <div class="dlg-body">
        <div class="steps">
          <svg class="tree-lines" width="60" height="330"><path :d="stepLines" stroke="#eee" stroke-dasharray="1.5 1.5" fill="none" /></svg>
          <i class="exp step-exp">-</i>
          <div v-for="(s, n) in steps" :key="n" class="step">
            <span class="step-text" :class="{ on: s.on, sub: s.sub }">{{ s.t }}</span>
          </div>
        </div>
        <div class="panel">
          <div class="sec first">
            <div class="sec-head"><i class="tri blue"></i>主要</div>
            <div class="line tool">
              <span class="lab high">刀具</span>
              <div class="sel tool-sel"><span class="sel-text">D8精 (铣刀-5 参数)</span><i class="tri"></i></div>
              <span class="btn"><svg width="28" height="28" viewBox="0 0 28 30" v-html="icons.toolNew"></svg></span>
              <span class="btn"><svg width="28" height="28" viewBox="0 0 28 30" v-html="icons.toolView"></svg></span>
            </div>
            <div class="line geom">
              <span class="lab low">指定特征几何体</span>
              <span class="btn end"><svg width="28" height="28" viewBox="0 0 28 30" v-html="icons.geomSpec"></svg></span>
              <span class="btn"><svg width="28" height="24" viewBox="0 0 28 24" v-html="icons.eyeBig"></svg></span>
            </div>
            <div class="line mode">
              <span class="lab">切削模式</span>
              <div class="sel mode-sel"><i class="ring"></i><span class="sel-text">圆形</span><i class="tri"></i></div>
            </div>
          </div>
          <div class="sec">
            <div class="sec-head"><i class="tri blue"></i>余量</div>
            <div class="line stock">
              <span class="lab">部件侧面余量</span>
              <div class="num">0.00000</div>
              <span class="btn lock"><svg width="19" height="22" viewBox="0 0 19 22" v-html="icons.lock"></svg></span>
            </div>
          </div>
          <div class="sec">
            <div class="sec-head"><i class="tri blue"></i>刀轨设置</div>
            <div class="line stock">
              <span class="lab">离起始直径的偏置距离</span>
              <div class="num">0.00000</div>
              <div class="sel unit-sel"><span class="sel-text">mm</span><i class="tri"></i></div>
            </div>
            <div class="check-line">
              <span class="check"><svg width="10" height="10" viewBox="0 0 10 10"><path d="M2 5l2 2.5L8 2.5" fill="none" stroke="#fff" stroke-width="1.3" /></svg></span>
              <span class="lab">添加清理刀路</span>
            </div>
          </div>
        </div>
      </div>
      <div class="ops">
        <div class="sec-head"><i class="tri blue"></i>操作</div>
        <div class="ops-row">
          <span class="btn"><svg width="28" height="30" viewBox="0 0 30 32" v-html="icons.opGen"></svg></span>
          <span class="btn"><svg width="28" height="30" viewBox="0 0 30 32" v-html="icons.opReplay"></svg></span>
          <span class="btn"><svg width="28" height="30" viewBox="0 0 32 32" v-html="icons.confirm"></svg></span>
          <span class="btn"><svg width="28" height="30" viewBox="0 0 30 32" v-html="icons.opPost"></svg></span>
          <span class="btn-orange"><svg width="28" height="30" viewBox="0 0 32 32" v-html="icons.orange"></svg></span>
        </div>
      </div>
      <div class="collapse"><i class="tri up"></i></div>
      <div class="dlg-foot">
        <span class="ok">确定</span>
        <span class="cancel">取消</span>
      </div>
    </div>
  </div>
</template>

<style>
html, body { margin: 0; overflow: hidden; background: #333; }
</style>

<style scoped>
.app {
  position: relative;
  width: 1670px;
  height: 911px;
  overflow: hidden;
  display: flex;
  flex-direction: column;
  background: #333;
  color: #e8e8e8;
  font-family: "Open Sans", "Noto Sans CJK SC", sans-serif;
  font-size: 12px;
}
i { font-style: normal; }
svg { display: block; flex-shrink: 0; }

.tri { display: block; width: 0; height: 0; border-left: 4px solid transparent; border-right: 4px solid transparent; border-top: 5px solid #eee; }
.tri.small { border-left-width: 3px; border-right-width: 3px; border-top-width: 3px; }
.tri.blue { border-left-width: 5px; border-right-width: 5px; border-top: 6px solid #3f9dc4; margin-right: 7px; }
.tri.up { border-top: 0; border-bottom: 5px solid #fff; }

/* top menu */
.menubar { position: relative; height: 37px; flex-shrink: 0; display: flex; align-items: center; background: #04729c; color: #f0f6f8; font-size: 13px; }
.quick { position: absolute; left: 0; top: 0; }
.menu-file { margin-left: -2px; width: 64px; padding-top: 5px; }
.menu-list { display: flex; height: 100%; align-items: stretch; }
.menu-item { padding: 7px 14px 0; line-height: 28px; margin-right: 4.4px; }
.menu-item.active { padding: 7px 15px 0; color: #e6d79a; border-bottom: 2px solid #c3d98f; box-sizing: border-box; height: 32px; margin-right: 2px; }
.search-box { position: absolute; left: 1607px; top: 12px; width: 70px; height: 20px; box-sizing: border-box; border: 1px solid #a8c8d6; background: #2f3a40; color: #8d9aa0; font-size: 11px; line-height: 18px; white-space: nowrap; overflow: hidden; }

/* ribbon */
.ribbon { height: 93px; flex-shrink: 0; display: flex; margin-left: -10px; padding-top: 2px; box-sizing: border-box; background: #2f2f2f; border-bottom: 1px solid #111; }
.rgroup { flex-shrink: 0; display: flex; flex-direction: column; box-sizing: border-box; border-right: 1px solid #181818; height: 87px; }
.ritems { display: flex; height: 73px; }
.ritem { flex-shrink: 0; display: flex; flex-direction: column; align-items: center; padding-top: 3px; box-sizing: border-box; height: 73px; }
.ritem.on { background: #00527f; }
.rlabel { margin-top: 5px; font-size: 11px; line-height: 15px; white-space: nowrap; color: #f2f2f2; }
.rlabel.second { margin-top: 1px; }
.ritem .tri { margin-top: 5px; }
.dim .rlabel { color: #7c7c7c; }
.rcol { flex-shrink: 0; display: flex; flex-direction: column; gap: 13px; padding-top: 5px; align-items: center; }
.rmix { flex-shrink: 0; display: flex; flex-direction: column; align-items: center; padding-top: 3px; }
.rmix-low { display: flex; align-items: center; gap: 10px; margin-top: 9px; margin-left: 9px; }
.rfoot { position: relative; flex: 1; display: flex; align-items: center; justify-content: center; color: #3a8fa8; font-size: 12px; box-sizing: border-box; }
.rfoot .tri { position: absolute; right: 9px; top: 7px; }
.rtail { flex-shrink: 0; display: flex; padding: 8px 0 0 2px; }
.rtail .ritem { height: auto; }

/* small toolbar */
.toolbar { height: 28px; flex-shrink: 0; display: flex; align-items: center; padding-left: 4px; background: #2f2f2f; border-bottom: 1px solid #151515; box-sizing: content-box; font-size: 12px; }
.tb-menu { margin-right: 6px; width: 43px; white-space: nowrap; }
.tb-sep { display: block; width: 1px; height: 22px; background: #181818; margin: 0 12px 0 11px; }
.tb-sep.first { margin-left: 8px; margin-right: 9px; }
.tb-sep.before-icons { margin-right: 14px; }
.tb-select { width: 155px; height: 22px; box-sizing: border-box; border: 1px solid #bcbcbc; background: #303030; display: flex; align-items: center; justify-content: space-between; padding: 0 5px 0 3px; }
.tb-select.wide { width: 149px; }
.tb-filter { margin: 0 7px 0 9px; }
.tb-icons { display: flex; align-items: center; gap: 7.5px; }
.tb-icons .tri { margin-right: 3px; }
.tb-views { display: flex; align-items: center; gap: 6px; margin-left: -7px; }

/* workspace */
.work { flex: 1; min-height: 0; display: flex; }
.strip { width: 14px; flex-shrink: 0; background: #2e2e2e; }
.strip svg { background: #444; }

.nav { width: 547px; flex-shrink: 0; display: flex; flex-direction: column; border-right: 1px solid #222; box-sizing: border-box; }
.nav-title { height: 28px; line-height: 28px; padding-left: 3px; flex-shrink: 0; color: #e0e0e0; }
.nav-frame { flex: 1; min-height: 0; background: #3a3a3a; border-top: 1px solid #222; border-left: 1px solid #222; padding-left: 3px; }
.nav-tools { height: 39px; display: flex; align-items: center; padding-left: 3px; }
.nav-tool { width: 32px; height: 32px; display: flex; align-items: center; justify-content: center; box-sizing: border-box; }
.nav-tool:nth-child(4) { margin-left: 3px; }
.nav-tool.on { background: #00527f; }
.nav-tool.off { border: 1px solid #666; margin-left: 3px; }
.nav-head { display: flex; height: 20px; background: #545454; }
.nav-head span { box-sizing: border-box; padding-left: 7px; line-height: 20px; border-right: 1px solid #333; color: #ddd; }
.nav-body { position: relative; }
.tree-lines { position: absolute; left: 0; top: 0; pointer-events: none; }
.nav-row { display: flex; height: 20px; box-sizing: border-box; border-bottom: 1px solid #272727; background: #353535; }
.nav-row:nth-child(odd) { background: #303030; }
.nav-cell { flex-shrink: 0; box-sizing: border-box; height: 19px; border-right: 1px solid #282828; display: flex; align-items: center; white-space: nowrap; overflow: hidden; }
.nav-cell:nth-child(1) { width: 197px; border-right: 1px solid #0c0c0c; }
.nav-cell:nth-child(2) { width: 37px; padding-left: 5px; }
.nav-cell:nth-child(3) { width: 89px; padding-left: 6px; }
.nav-cell:nth-child(4) { width: 35px; }
.nav-cell:nth-child(5) { width: 70px; }
.nav-cell:nth-child(6) { width: 55px; }
.nav-cell:nth-child(7) { width: 56px; }
.nav-text { line-height: 19px; color: #e4e4e4; }
.exp { flex-shrink: 0; box-sizing: border-box; display: block; width: 9px; height: 9px; border: 1px solid #eee; color: #eee; font-size: 9px; line-height: 6px; text-align: center; margin-right: 6px; background: #333; position: relative; z-index: 1; }
.warn { flex-shrink: 0; width: 8px; color: #f4a43a; font-size: 14px; font-weight: 700; }
.nav-row.picked .nav-text { flex: 1; height: 19px; background: #00527f; color: #fff; }
.nav-row.picked .second, .nav-row.picked .third { background: #00527f; }

/* viewport */
.view { flex: 1; min-width: 0; margin-left: 12px; display: flex; flex-direction: column; }
.tabs { height: 26px; flex-shrink: 0; display: flex; box-sizing: border-box; background: #2f2f2f; border-bottom: 2px solid #3396bd; font-size: 12px; color: #eee; }
.tab { flex-shrink: 0; display: flex; align-items: center; gap: 3px; white-space: nowrap; }
.tab.one { width: 507px; justify-content: flex-end; padding-right: 16px; box-sizing: border-box; gap: 0; }
.tab.two { width: 149px; padding-left: 11px; box-sizing: border-box; }
.tab.three { width: 228px; padding-left: 10px; box-sizing: border-box; }
.tab.active { width: 133px; padding-left: 5px; box-sizing: border-box; background: #3396bd; }
.tab-doc { margin-left: 5px; }
.tab-x { color: #7fb2c8; font-size: 11px; font-weight: 700; margin-left: 4px; }
.canvas { position: relative; flex: 1; min-height: 0; background: #92ffff; overflow: hidden; }
.gz { font-family: "Liberation Sans", sans-serif; font-size: 11px; }
.snap-tip { position: absolute; left: 715px; top: 516px; width: 29px; height: 20px; box-sizing: border-box; border: 1px solid #777; background: #ffffe8; color: #111; font-size: 12px; line-height: 18px; text-align: center; }

/* operation dialog */
.dlg { position: absolute; left: 285px; top: 159px; width: 586px; height: 650px; box-sizing: border-box; display: flex; flex-direction: column; background: #333; border: 1px solid #1c1c1c; border-top: 0; z-index: 5; }
.dlg-title { height: 24px; flex-shrink: 0; display: flex; align-items: center; padding: 0 0 2px 7px; box-sizing: border-box; background: #3396bd; color: #fff; font-size: 13px; }
.dlg-name { margin-left: 8px; flex: 1; }
.dlg-help { font: 700 15px "Liberation Sans", sans-serif; margin-right: 12px; }
.dlg-close { font-size: 16px; font-weight: 700; margin-right: 7px; }
.dlg-find { height: 40px; flex-shrink: 0; display: flex; align-items: center; padding: 0 9px; color: #e0e0e0; }
.dlg-find span { margin-left: 2px; }
.find-input { margin-left: 6px; flex: 1; height: 22px; box-sizing: border-box; border: 1px solid #aaa; background: #444; }
.dlg-body { height: 450px; flex-shrink: 0; display: flex; gap: 10px; padding-left: 11px; }
.steps { position: relative; width: 167px; box-sizing: border-box; border: 1px solid #1e1e1e; overflow: hidden; }
.step { height: 20px; box-sizing: border-box; border-bottom: 1px solid #272727; background: #353535; }
.step:nth-child(even) { background: #303030; }
.step-text { display: block; height: 19px; margin-left: 21px; padding-left: 1px; line-height: 19px; font-size: 12px; color: #e4e4e4; white-space: nowrap; }
.step-text.sub { margin-left: 40px; }
.step-text.on { background: #00527f; color: #fff; }
.step-exp { position: absolute; left: 7px; top: 106px; margin: 0; }
.panel { width: 386px; box-sizing: border-box; border: 1px solid #111; display: flex; flex-direction: column; gap: 4px; background: #333; }
.sec { background: #444; padding: 0 11px 0 9px; border-bottom: 1px solid #2a2a2a; }
.sec-head { height: 24px; box-sizing: border-box; padding-bottom: 2px; display: flex; align-items: center; color: #3f9dc4; font-size: 14px; margin-left: -3px; }
.line { display: flex; align-items: center; box-sizing: border-box; }
.lab { color: #e4e4e4; font-size: 12px; white-space: nowrap; margin-right: auto; }
.lab.high { align-self: flex-start; line-height: 25px; }
.lab.low { padding-top: 6px; }
.line.tool { align-items: flex-start; gap: 2px; padding: 5px 0 2px; border-bottom: 1px solid #111; }
.line.geom { gap: 2px; padding: 3px 0 2px; border-bottom: 1px solid #111; }
.line.mode { padding: 3px 0 7px; }
.line.stock { padding: 6px 0 0; gap: 2px; }
.sec:nth-child(2) { height: 62px; box-sizing: border-box; }
.sec:nth-child(3) { height: 86px; box-sizing: border-box; }
.btn { width: 32px; height: 32px; box-sizing: border-box; border: 1px solid #aaa; background: #333; display: flex; align-items: center; justify-content: center; flex-shrink: 0; }
.btn.lock { width: 24px; height: 23px; background: transparent; }
.sel { height: 25px; box-sizing: border-box; border: 1px solid #a8a8a8; background: #383838; display: flex; align-items: center; padding: 0 6px; color: #e4e4e4; }
.tool-sel { width: 117px; justify-content: space-between; padding: 0 5px; }
.tool-sel .sel-text { width: 92px; overflow: hidden; white-space: nowrap; font-size: 12px; }
.mode-sel { width: 138px; height: 26px; }
.mode-sel .tri { margin-left: auto; }
.ring { width: 16px; height: 16px; box-sizing: border-box; border: 1.5px solid #3f9dc4; border-radius: 50%; margin-right: 4px; }
.unit-sel { width: 62px; justify-content: space-between; margin-left: 2px; }
.num { width: 82px; height: 23px; box-sizing: border-box; border: 1px solid #bbb; background: #3a3a3a; padding-left: 22px; overflow: hidden; white-space: nowrap; font: 15px/21px "Liberation Mono", monospace; color: #e4e4e4; }
.check-line { display: flex; align-items: center; margin-top: 3px; }
.check { width: 12px; height: 12px; margin: 0 4px 0 2px; border-radius: 2px; background: #0a5cb5; display: flex; align-items: center; justify-content: center; }
.ops { margin: 1px 9px 0 9px; height: 70px; background: #444; border-bottom: 1px solid #2a2a2a; padding-left: 10px; position: relative; flex-shrink: 0; box-sizing: border-box; }
.ops .sec-head { height: 24px; margin-left: -3px; }
.ops-row { display: flex; gap: 2px; padding-left: 206px; margin-top: 6px; }
.btn-orange { position: absolute; left: 524px; top: 30px; width: 34px; height: 32px; background: #ffad03; border-left: 1px solid #7a5a10; display: flex; align-items: center; justify-content: center; }
.collapse { height: 21px; flex-shrink: 0; margin: 0 5px; border-bottom: 1px solid #111; display: flex; justify-content: center; align-items: center; padding-top: 7px; box-sizing: border-box; }
.dlg-foot { display: flex; justify-content: flex-end; gap: 5px; padding: 8px 14px 0 0; }
.ok, .cancel { width: 54px; height: 25px; box-sizing: border-box; text-align: center; line-height: 25px; font-size: 12px; }
.ok { background: #3f9dc4; color: #fff; }
.cancel { border: 1px solid #3c8fb0; line-height: 23px; color: #7fb0c4; }
</style>
